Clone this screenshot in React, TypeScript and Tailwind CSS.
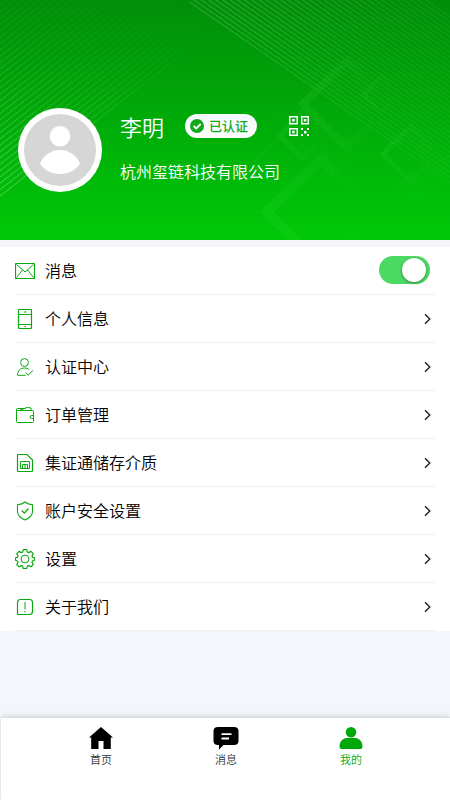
import React from 'react';

interface MenuItem {
  label: string;
  icon: React.ReactNode;
}

const leftLines = Array.from({ length: 40 }, (_, i) => 196 - i * 6.35);
const rightLines = Array.from({ length: 34 }, (_, i) => i * 5);

const HeaderPattern: React.FC = () => (
  <svg className="absolute inset-0" width="450" height="240" viewBox="0 0 450 240" fill="none">
    <defs>
      <linearGradient id="leftFade" gradientUnits="userSpaceOnUse" x1="0" y1="190" x2="190" y2="0">
        <stop offset="0" stopColor="#fff" stopOpacity="0.32" />
        <stop offset="0.5" stopColor="#fff" stopOpacity="0.15" />
        <stop offset="1" stopColor="#fff" stopOpacity="0.03" />
      </linearGradient>
      <linearGradient id="leftTop" x1="0" y1="0" x2="0" y2="1">
        <stop offset="0" stopColor="#fff" stopOpacity="0.4" />
        <stop offset="0.6" stopColor="#fff" />
      </linearGradient>
      <mask id="leftMask">
        <rect width="240" height="240" fill="url(#leftTop)" />
      </mask>
      <linearGradient id="rightFade" gradientUnits="userSpaceOnUse" x1="225" y1="25" x2="430" y2="125">
        <stop offset="0" stopColor="#fff" stopOpacity="0.22" />
        <stop offset="0.6" stopColor="#fff" stopOpacity="0.11" />
        <stop offset="1" stopColor="#fff" stopOpacity="0.06" />
      </linearGradient>
      <linearGradient id="shapeFade" x1="0" y1="0" x2="1" y2="0">
        <stop offset="0" stopColor="#4be04b" stopOpacity="0.13" />
        <stop offset="0.5" stopColor="#4be04b" stopOpacity="0.07" />
        <stop offset="0.9" stopColor="#4be04b" stopOpacity="0" />
      </linearGradient>
      <pattern id="dots" width="3" height="3" patternUnits="userSpaceOnUse">
        <rect width="1" height="1" fill="#5be85b" fillOpacity="0.11" />
      </pattern>
    </defs>
    <g stroke="url(#leftFade)" strokeWidth="1" mask="url(#leftMask)">
      {leftLines.map((y) => (
        <path key={y} d={`M0 ${y}L240 ${y - 187}`} />
      ))}
    </g>
    <g stroke="url(#rightFade)" strokeWidth="1">
      {rightLines.map((y) => (
        <path key={y} d={`M189 ${1.5 - y}L450 ${182 - y}`} />
      ))}
    </g>
    <path d="M288 99l62 62-17 17-62-62z" fill="url(#dots)" />
    <path d="M416 130l34 34v12l-38 34-20-20 28-30z" fill="url(#dots)" />
    <g stroke="url(#shapeFade)">
      <path d="M347 61L303 104l44 44 44-44z" strokeWidth="8" />
      <path d="M322 159L267 212l55 55 55-55z" strokeWidth="10" />
      <path d="M302 112L280 136l22 22 22-22z" strokeWidth="5" />
      <path d="M382 75L364 95l18 18 18-18z" strokeWidth="4" strokeOpacity="0.7" />
      <path d="M411 126L383 154l28 28 28-28z" strokeWidth="5" />
      <path d="M271 146L253 164l18 18 18-18z" strokeWidth="3" strokeOpacity="0.6" />
    </g>
  </svg>
);

const Icon: React.FC<{ children: React.ReactNode }> = ({ children }) => (
  <svg width="20" height="20" viewBox="0 0 20 20" fill="none" stroke="#0aa80e" strokeWidth="1">
    {children}
  </svg>
);

const items: MenuItem[] = [
  {
    label: '消息',
    icon: (
      <Icon>
        <rect x="0.5" y="2.5" width="19" height="15" rx="0.5" strokeWidth="1.2" />
        <path d="M1.5 3.5L10 11l8.5-7.5M1.5 16.5L7.5 9M18.5 16.5L12.5 9" />
      </Icon>
    ),
  },
  {
    label: '个人信息',
    icon: (
      <Icon>
        <rect x="3.5" y="0.5" width="13" height="19" rx="1" strokeWidth="1.2" />
        <path d="M3.5 5.5h13M3.5 15.5h13M9 3h2.5M9.5 17.5h1.5" />
      </Icon>
    ),
  },
  {
    label: '认证中心',
    icon: (
      <Icon>
        <circle cx="9.5" cy="5.5" r="3.9" />
        <path d="M10.5 18.3H2.5c0-4.5 3-7.3 7-7.3 2 0 3.5.6 4.7 1.7M10.5 15.5l2.7 2.8 4.8-5" />
      </Icon>
    ),
  },
  {
    label: '订单管理',
    icon: (
      <Icon>
        <path d="M1.5 4.5v12q0 1 1 1h15q1 0 1-1v-10q0-1-1-1h-15q-1 0-1-1t1-1h8M5 5.2L12.5 2.3l3.5.7v2.2" />
        <path d="M18.5 10.5H16.5a1.3 1.3 0 0 0 0 3h2z" />
      </Icon>
    ),
  },
  {
    label: '集证通储存介质',
    icon: (
      <Icon>
        <path d="M3 1.5h9L17.5 7v10.5q0 1-1 1h-13q-1 0-1-1V2q0-.5.5-.5z" strokeWidth="1.2" />
        <path d="M5.5 15.5v-7h9v7zM7.5 15.5V11.5h5v4M10 11.5v4" />
      </Icon>
    ),
  },
  {
    label: '账户安全设置',
    icon: (
      <Icon>
        <path
          d="M10 1C8 2.8 5.5 3.5 2.5 3.7v6.8c0 4 3.5 6.8 7.5 8.5 4-1.7 7.5-4.5 7.5-8.5V3.7C14.5 3.5 12 2.8 10 1z"
          strokeWidth="1.1"
        />
        <path d="M6.7 9.5l2.6 2.7 4.2-4.7" strokeWidth="1.2" />
      </Icon>
    ),
  },
  {
    label: '设置',
    icon: (
      <Icon>
        <circle cx="10" cy="10" r="3.9" />
        <path
          d="M8.3.6h3.4l.7 2.5 1.3.5 2.3-1.2 2.2 2.3-1.2 2.2.5 1.3 2 .7v2.4l-2 .7-.5 1.3 1.2 2.2-2.2 2.3-2.3-1.2-1.3.5-.7 2.4H8.3l-.7-2.4-1.3-.5L4 17.8l-2.2-2.3L3 13.3 2.5 12l-2-.7V8.9l2-.7.5-1.3L1.8 4.7 4 2.4l2.3 1.2 1.3-.5z"
          strokeWidth="1.2"
          strokeLinejoin="round"
        />
      </Icon>
    ),
  },
  {
    label: '关于我们',
    icon: (
      <Icon>
        <path d="M2.5 17.5V5.5q0-3 3-3h9q3 0 3 3v9q0 3-3 3z" strokeWidth="1.2" />
        <path d="M10 5v7.5M10 14v1.5" />
      </Icon>
    ),
  },
];

const Toggle: React.FC = () => (
  <div className="mr-[5px] mb-0.5 flex h-7 w-[51px] items-center justify-end rounded-full bg-[#4cd964] pr-1">
    <div className="h-6 w-6 rounded-full bg-white shadow-[0_1px_3px_rgba(0,0,0,0.4)]" />
  </div>
);

const Chevron: React.FC = () => (
  <svg className="mr-[3px]" width="10" height="12" viewBox="0 0 10 12" fill="none" stroke="#222" strokeWidth="1.4">
    <path d="M3 1.2L7.8 6 3 10.8" />
  </svg>
);

const QrIcon: React.FC = () => (
  <svg width="20" height="20" viewBox="0 0 20 20" fill="#fff">
    <path
      fillRule="evenodd"
      d="M0 0h9v8.500H0zM1.500 1.500v5.500h6v-5.500zM12 0h8v8.500h-8zM13.500 1.500v5.500h5v-5.500zM0 12h9v8H0zM1.500 13.500v5h6v-5z"
    />
    <path d="M3.200 3h2.500v2.500H3.200zM14.800 3h2.500v2.500h-2.500zM3.200 14.800h2.500v2.500H3.200zM12 12h2v2h-2zM18 12h2v2h-2zM15 15h2.500v2.500H15zM12 18h2v2h-2zM18 18h2v2h-2z" />
  </svg>
);

const App: React.FC = () => {
  return (
    <div className="flex h-[800px] w-[450px] flex-col overflow-hidden bg-[#f5f6fb] font-['Noto_Sans_CJK_SC',sans-serif] font-[350] text-black">
      <header className="relative h-60 shrink-0 bg-linear-to-b from-[#008e08] to-[#00c908]">
        <HeaderPattern />
        <div className="relative flex pt-[108px] pl-[18px]">
          <div className="h-[84px] w-[84px] rounded-full bg-white p-1.5">
            <svg width="72" height="72" viewBox="0 0 72 72" fill="#fff">
              <circle cx="36" cy="36" r="36" fill="#d6d6d6" />
              <circle cx="36" cy="22.3" r="10.3" />
              <path d="M16 49.5C20 40.5 27.5 36 36 36s16 4.5 20 13.5C51.5 56.5 44.5 60 36 60s-15.5-3.5-20-10.5z" />
            </svg>
          </div>
          <div className="ml-[18px] pt-1">
            <div className="flex h-8 items-center">
              <h1 className="mb-1 w-[65px] text-[22px] leading-8 font-[350] text-white">李明</h1>
              <div className="mb-1 flex h-6 w-[72px] items-center rounded-full bg-linear-to-b from-[#f5f7ff] to-white pl-[5px]">
                <svg width="14" height="14" viewBox="0 0 14 14" fill="none">
                  <circle cx="7" cy="7" r="7" fill="#14a91b" />
                  <path d="M3.7 7l2.5 2.5 4.5-4.5" stroke="#fff" strokeWidth="1.8" />
                </svg>
                <span className="ml-[5px] text-[13px] leading-6 font-medium text-[#14a91b]">已认证</span>
              </div>
              <div className="mb-1 ml-8">
                <QrIcon />
              </div>
            </div>
            <p className="mt-[15px] text-base leading-6 text-white">杭州玺链科技有限公司</p>
          </div>
        </div>
      </header>

      <main className="mt-[7px] bg-white">
        {items.map((item, index) => (
          <div key={item.label} className="mr-[15px] ml-[15px] flex h-12 items-center border-b border-[#f0f0f2]">
            {item.icon}
            <span className="mb-0.5 ml-2.5 flex-grow text-base leading-6">{item.label}</span>
            {index === 0 ? <Toggle /> : <Chevron />}
          </div>
        ))}
      </main>

      <nav className="mt-auto ml-px h-[83px] border-t border-[#d8dde3] bg-white shadow-[0_-1px_6px_rgba(0,0,0,0.14)]">
        <div className="mx-auto grid w-[375px] grid-cols-3 pt-2 text-[11px] leading-4 text-[#333]">
          <div className="flex flex-col items-center gap-px">
            <svg width="24" height="24" viewBox="0 0 24 24">
              <path d="M12 1L0 11.5h2.2V23H9.5v-8h5v8h7.3V11.5H24z" />
            </svg>
            <span className="pl-px">首页</span>
          </div>
          <div className="flex flex-col items-center gap-px">
            <svg width="26" height="24" viewBox="0 0 26 24">
              <path d="M5 1h16q4.500 0 4.500 4v10q0 4-4.500 4H10.500L6 23.500V19H5q-4.500 0-4.500-4V5q0-4 4.500-4z" />
              <path d="M8.500 8.200H18.500M8.500 12.500h7.500" stroke="#fff" strokeWidth="1.8" />
            </svg>
            <span className="pl-px">消息</span>
          </div>
          <div className="flex flex-col items-center gap-px text-[#00a80b]">
            <svg width="24" height="24" viewBox="0 0 24 24" fill="currentColor">
              <circle cx="12" cy="6.2" r="5.3" />
              <path d="M7 12h10c4 1 6.500 4 6.500 8.500q0 2.500-2 2.500h-19q-2 0-2-2.500C.5 16 3 13 7 12z" />
            </svg>
            <span className="pl-px">我的</span>
          </div>
        </div>
      </nav>
    </div>
  );
};

export default App;
